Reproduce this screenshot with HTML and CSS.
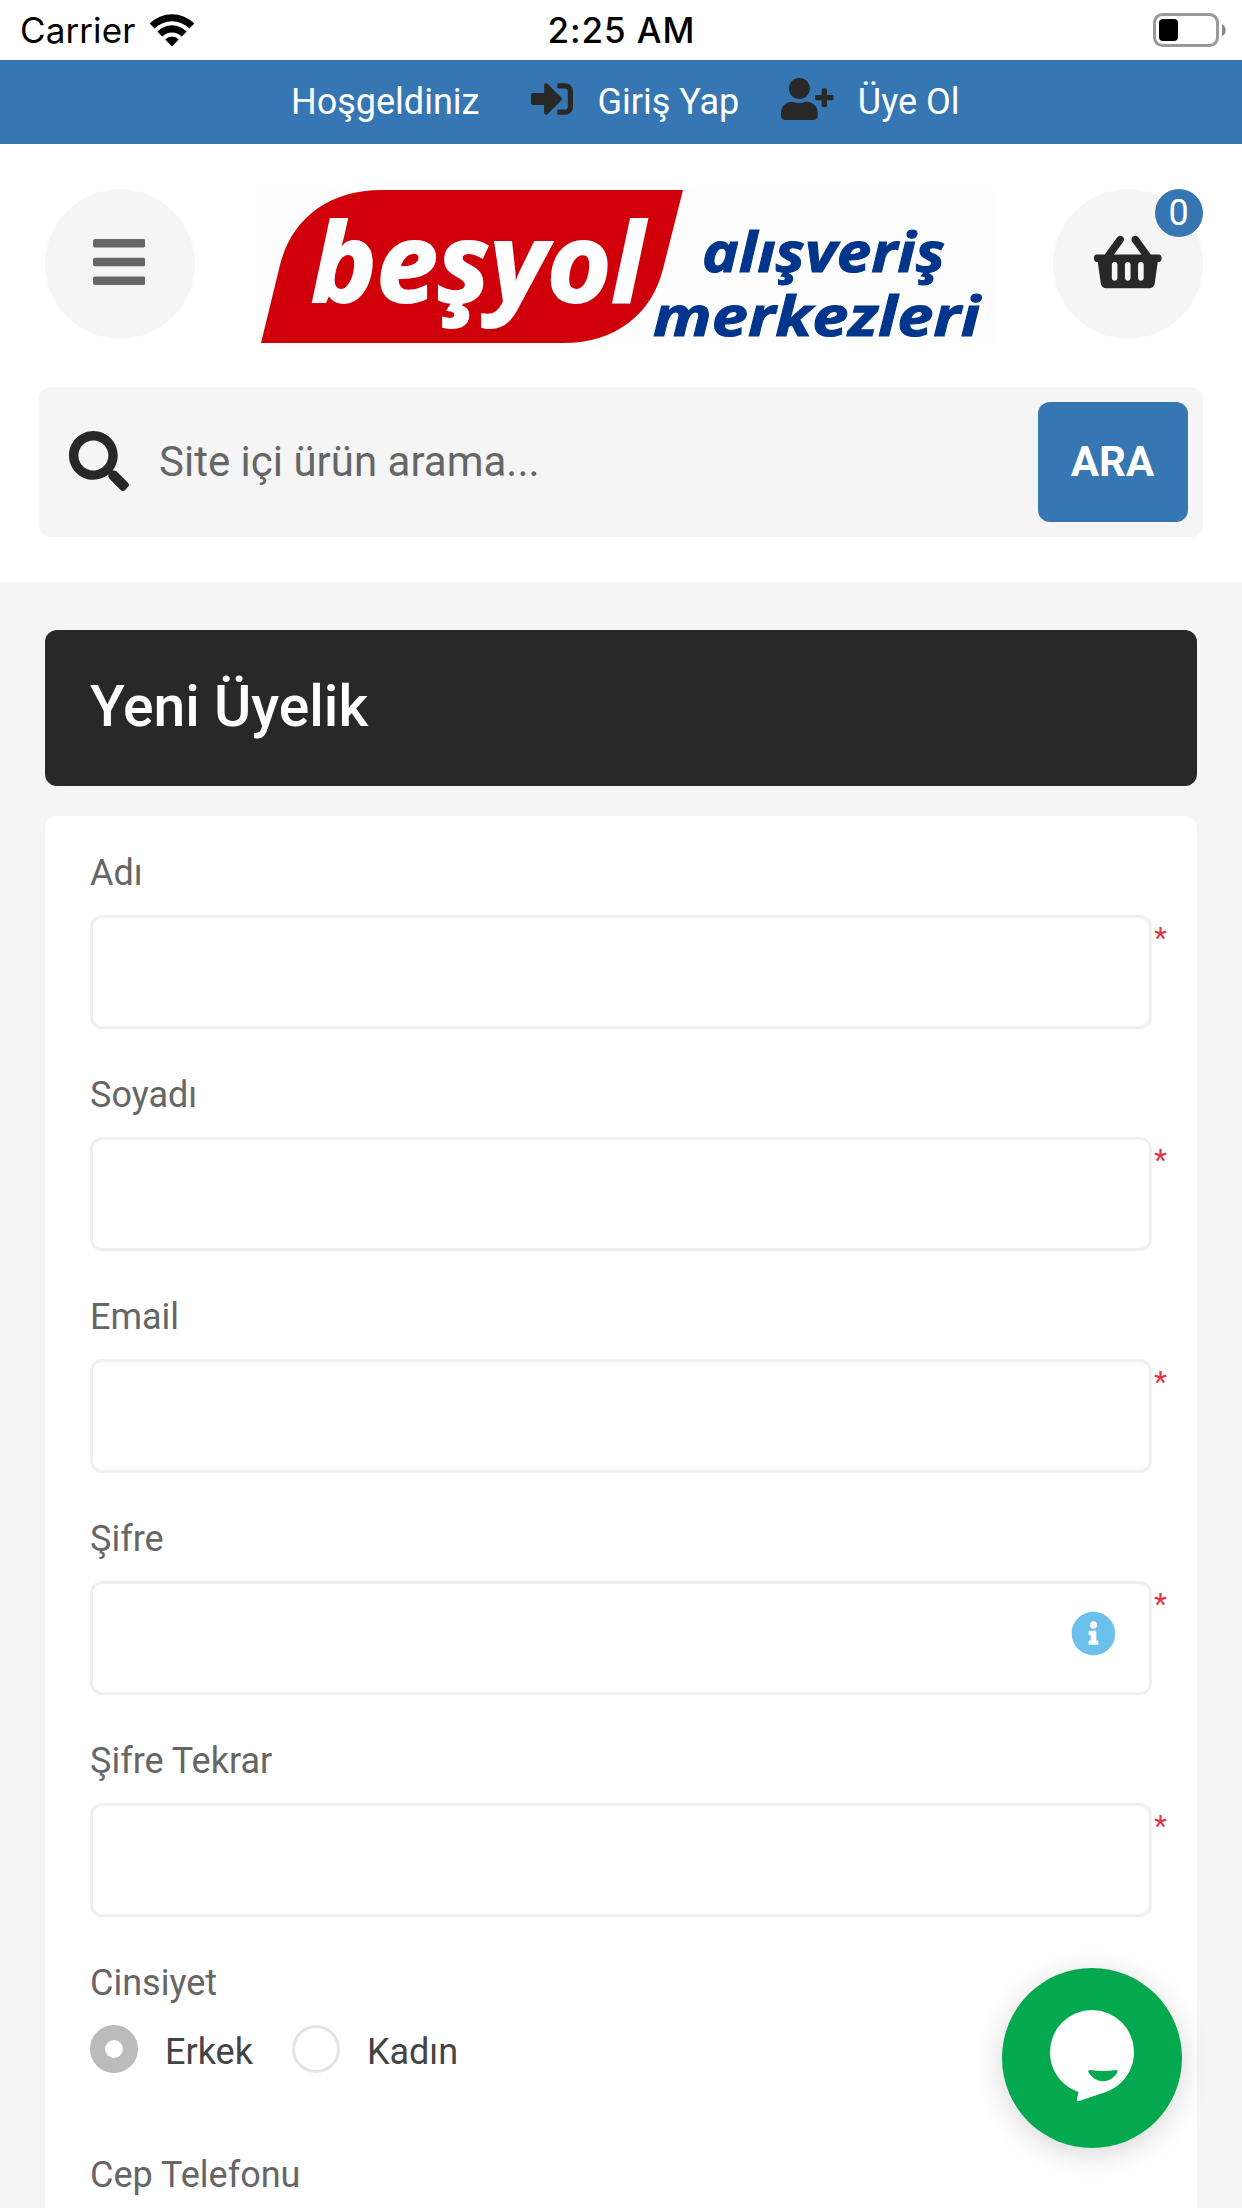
FILE: index.html
```html
<!DOCTYPE html>
<html lang="tr">
<head>
<meta charset="utf-8">
<title>Yeni Üyelik</title>
<link rel="stylesheet" href="styles.css">
</head>
<body>
<div class="status">
  <div class="status-left">
    <span class="carrier">Carrier</span>
    <svg class="wifi" viewBox="0 0 46 34"><path d="M0.6 10.6a31.5 31.5 0 0 1 44.8 0l-4.9 5a24.6 24.6 0 0 0-35 0z"/><path d="M8.3 18.5a20.6 20.6 0 0 1 29.4 0l-5 5a13.6 13.6 0 0 0-19.4 0z"/><path d="M16.2 26.4a9.6 9.6 0 0 1 13.6 0L23 33.4z"/></svg>
  </div>
  <span class="clock">2:25 AM</span>
  <svg class="battery" viewBox="0 0 74 34"><rect x="1.5" y="1.5" width="63" height="31" rx="8" fill="none" stroke="#999" stroke-width="3"/><rect x="6" y="6" width="19" height="22" rx="4"/><path d="M69 11c5 2.500 5 10 0 12z" fill="#888"/></svg>
</div>
<nav class="topbar">
  <span class="welcome">Hoşgeldiniz</span>
  <a class="login"><svg class="icon-login" viewBox="0 0 512 512"><path d="M416 448h-84c-6.600 0-12-5.400-12-12v-40c0-6.600 5.400-12 12-12h84c17.700 0 32-14.300 32-32V160c0-17.700-14.300-32-32-32h-84c-6.600 0-12-5.400-12-12V76c0-6.600 5.400-12 12-12h84c53 0 96 43 96 96v192c0 53-43 96-96 96zm-47-209L201 71c-15-15-41-4.500-41 17v96H24c-13.300 0-24 10.700-24 24v96c0 13.300 10.700 24 24 24h136v96c0 21.500 26 32 41 17l168-168c9.300-9.400 9.300-24.600 0-34z"/></svg><span>Giriş Yap</span></a>
  <a class="join"><svg class="icon-join" viewBox="0 0 640 512"><path d="M624 208h-64v-64c0-8.800-7.200-16-16-16h-32c-8.800 0-16 7.200-16 16v64h-64c-8.800 0-16 7.200-16 16v32c0 8.800 7.200 16 16 16h64v64c0 8.800 7.200 16 16 16h32c8.800 0 16-7.200 16-16v-64h64c8.800 0 16-7.200 16-16v-32c0-8.800-7.200-16-16-16zm-400 48c70.700 0 128-57.300 128-128S294.700 0 224 0 96 57.300 96 128s57.300 128 128 128zm89.600 32h-16.700c-22.200 10.200-46.900 16-72.900 16s-50.600-5.800-72.900-16h-16.700C60.200 288 0 348.200 0 422.400V464c0 26.500 21.500 48 48 48h352c26.500 0 48-21.500 48-48v-41.600c0-74.200-60.200-134.400-134.400-134.400z"/></svg><span>Üye Ol</span></a>
</nav>
<header class="header">
  <div class="brand-row">
    <button class="round"><svg class="icon-menu" viewBox="0 0 448 512"><path d="M16 132h416c8.800 0 16-7.200 16-16V76c0-8.800-7.200-16-16-16H16C7.200 60 0 67.200 0 76v40c0 8.800 7.200 16 16 16zm0 160h416c8.800 0 16-7.200 16-16v-40c0-8.800-7.200-16-16-16H16c-8.800 0-16 7.200-16 16v40c0 8.800 7.200 16 16 16zm0 160h416c8.800 0 16-7.200 16-16v-40c0-8.800-7.200-16-16-16H16c-8.800 0-16 7.200-16 16v40c0 8.800 7.200 16 16 16z"/></svg></button>
    <svg class="logo" viewBox="253 189 741 154">
      <rect x="253" y="189" width="741" height="154" fill="#fdfdfd"/>
      <path d="M260 343 279 265C290 221 325 190 381 190H682L662 269C651 313 616 343 562 343Z" fill="#d0000b"/>
      <text class="logo-main" x="310" y="301.500" textLength="333" lengthAdjust="spacingAndGlyphs">beşyol</text>
      <text class="logo-sub" x="701" y="272" textLength="243" lengthAdjust="spacingAndGlyphs">alışveriş</text>
      <text class="logo-sub" x="652" y="335.500" textLength="327" lengthAdjust="spacingAndGlyphs">merkezleri</text>
    </svg>
    <button class="round"><svg class="icon-basket" viewBox="0 0 576 512"><path d="M576 216v16c0 13.300-10.700 24-24 24h-8l-26.100 182.800C514.500 462.400 494.300 480 470.400 480H105.600c-23.900 0-44.100-17.600-47.500-41.200L32 256h-8c-13.300 0-24-10.700-24-24v-16c0-13.300 10.700-24 24-24h67.300l106.800-146.800c10.400-14.300 30.400-17.500 44.700-7.100 14.300 10.400 17.500 30.400 7.100 44.700L170.500 192h235.100L326.100 82.800c-10.400-14.300-7.200-34.300 7.100-44.700 14.300-10.400 34.300-7.200 44.700 7.100L484.700 192H552c13.300 0 24 10.700 24 24zM312 392V280c0-13.300-10.700-24-24-24s-24 10.700-24 24v112c0 13.300 10.700 24 24 24s24-10.700 24-24zm112 0V280c0-13.300-10.700-24-24-24s-24 10.700-24 24v112c0 13.300 10.700 24 24 24s24-10.700 24-24zm-224 0V280c0-13.300-10.700-24-24-24s-24 10.700-24 24v112c0 13.300 10.700 24 24 24s24-10.700 24-24z"/></svg><span class="badge">0</span></button>
  </div>
  <form class="search">
    <svg class="icon-search" viewBox="0 0 512 512"><path d="M505 442.700 405.300 343c-4.500-4.500-10.600-7-17-7H372c27.600-35.300 44-79.700 44-128C416 93.100 322.900 0 208 0S0 93.100 0 208s93.100 208 208 208c48.300 0 92.700-16.400 128-44v16.300c0 6.400 2.500 12.500 7 17l99.700 99.700c9.400 9.400 24.600 9.400 33.900 0l28.300-28.300c9.400-9.400 9.400-24.600.1-34zM208 336c-70.700 0-128-57.200-128-128 0-70.700 57.200-128 128-128 70.700 0 128 57.200 128 128 0 70.700-57.200 128-128 128z"/></svg>
    <input class="search-input" type="text" placeholder="Site içi ürün arama...">
    <button class="search-button" type="button">ARA</button>
  </form>
</header>
<main class="page">
  <h1 class="title">Yeni Üyelik</h1>
  <form class="card">
    <label class="field"><span class="label">Adı</span><span class="control"><input type="text"><span class="req">*</span></span></label>
    <label class="field"><span class="label">Soyadı</span><span class="control"><input type="text"><span class="req">*</span></span></label>
    <label class="field"><span class="label">Email</span><span class="control"><input type="text"><span class="req">*</span></span></label>
    <label class="field"><span class="label">Şifre</span><span class="control"><input type="password"><span class="req">*</span><svg class="icon-info" viewBox="0 0 512 512"><path d="M256 8C119 8 8 119.100 8 256c0 137 111 248 248 248s248-111 248-248C504 119.100 393 8 256 8zm0 110c23.200 0 42 18.800 42 42s-18.800 42-42 42-42-18.800-42-42 18.800-42 42-42zm56 254c0 6.600-5.400 12-12 12h-88c-6.600 0-12-5.400-12-12v-24c0-6.600 5.400-12 12-12h12v-64h-12c-6.600 0-12-5.400-12-12v-24c0-6.600 5.400-12 12-12h64c6.600 0 12 5.400 12 12v100h12c6.600 0 12 5.400 12 12z"/></svg></span></label>
    <label class="field"><span class="label">Şifre Tekrar</span><span class="control"><input type="password"><span class="req">*</span></span></label>
    <div class="gender">
      <span class="label">Cinsiyet</span>
      <div class="radios">
        <label class="radio"><span class="dot checked"></span>Erkek</label>
        <label class="radio"><span class="dot"></span>Kadın</label>
      </div>
    </div>
    <span class="label">Cep Telefonu</span>
  </form>
</main>
<button class="chat"><svg class="icon-chat" viewBox="0 0 180 180"><path d="M90 42a42 42 0 0 1 42 42c0 19-12 34-28 40L77 133Q74 134 75 131L76.500 124C60 118 48 103 48 84A42 42 0 0 1 90 42Z" fill="#fff"/><path d="M88 102Q101 104 114 102Q116.500 102 115 105C108 116 94 116 87 105Q85 102 88 102Z" fill="#04a84e"/></svg></button>
</body>
</html>
```
FILE: styles.css
```css
* { box-sizing: border-box; }
body {
  margin: 0;
  height: 2208px;
  overflow: hidden;
  background: #f5f5f5;
  font-family: Roboto, "Liberation Sans", sans-serif;
  font-size: 36px;
  color: #666;
}
button { border: 0; padding: 0; font-family: inherit; }
svg { display: block; flex: none; }

.status {
  display: grid;
  grid-template-columns: 1fr auto 1fr;
  align-items: center;
  height: 60px;
  padding: 0 15px 0 20px;
  background: #fff;
  color: #000;
  font-family: Inter, "Liberation Sans", sans-serif;
  font-size: 35px;
  line-height: 60px;
}
.status-left { display: flex; align-items: center; gap: 14px; letter-spacing: 0.1px; }
.status-left .wifi { margin-top: -1px; }
.wifi { width: 46px; height: 34px; }
.clock { font-weight: 500; letter-spacing: 0.9px; margin-left: -4px; }
.battery { width: 74px; height: 34px; justify-self: end; }

.topbar {
  display: flex;
  align-items: center;
  height: 84px;
  padding-left: 291px;
  background: #3677b3;
  color: #fff;
  line-height: 84px;
}
.topbar a { display: flex; align-items: center; gap: 24px; }
.topbar svg { fill: #282828; margin-top: -7px; }
.login { margin-left: 52px; }
.join { margin-left: 42px; }
.icon-login { width: 42px; height: 42px; }
.icon-join { width: 52.500px; height: 42px; }

.header { height: 438px; padding: 45px 39px 45px; background: #fff; }
.brand-row { display: flex; justify-content: space-between; padding-left: 6px; height: 198px; }
.round {
  position: relative;
  display: flex;
  align-items: center;
  justify-content: center;
  width: 150px;
  height: 150px;
  border-radius: 50%;
  background: #f5f5f5;
}
.round svg { height: 60px; margin-top: -4px; }
.round .icon-menu { width: 52.500px; margin-right: 2px; fill: #666; }
.icon-basket { width: 67.500px; fill: #282828; }
.badge {
  position: absolute;
  top: 0;
  right: 0;
  width: 48px;
  height: 48px;
  padding-right: 1px;
  border-radius: 50%;
  background: #3677b3;
  color: #fff;
  font-size: 36px;
  line-height: 48px;
  text-align: center;
}
.logo { width: 741px; height: 154px; }
.logo-main, .logo-sub {
  font-family: "Open Sans", "Noto Sans", sans-serif;
  font-weight: 700;
  font-style: italic;
}
.logo-main { font-size: 109px; fill: #fff; stroke: #fff; stroke-width: 2; }
.logo-sub { font-size: 55px; fill: #00358c; stroke: #00358c; stroke-width: 1; }

.search {
  display: flex;
  align-items: center;
  height: 150px;
  padding: 0 15px 0 30px;
  border-radius: 12px;
  background: #f5f5f5;
}
.icon-search { width: 60px; height: 60px; margin-top: -3px; fill: #282828; }
.search-input {
  flex: 1;
  min-width: 0;
  height: 120px;
  padding: 0 0 2px 30px;
  border: 0;
  background: none;
  font: 42px Roboto, "Liberation Sans", sans-serif;
}
.search-input::placeholder { color: #666; }
.search-button {
  width: 150px;
  height: 120px;
  padding: 0 1px 2px 0;
  border-radius: 12px;
  background: #3677b3;
  color: #fff;
  font-size: 42px;
  font-weight: 700;
}

.page { padding: 48px 45px 0; }
.title {
  height: 156px;
  margin: 0 0 30px;
  padding-left: 45px;
  border-radius: 12px;
  background: #282828;
  color: #fff;
  font-size: 57px;
  font-weight: 500;
  line-height: 153px;
}
.card { height: 1500px; padding: 30px 45px; border-radius: 12px; background: #fff; }
.field { display: block; height: 222px; }
.label { display: block; height: 69px; line-height: 54px; }
.control { position: relative; display: block; }
.control input {
  display: block;
  width: 100%;
  height: 114px;
  border: 3px solid #f0f0f0;
  border-radius: 12px;
  background: #fff;
}
.req {
  position: absolute;
  top: 8px;
  left: 1064px;
  color: #dc3545;
  font-size: 30px;
  line-height: 30px;
}
.icon-info {
  position: absolute;
  top: 30px;
  right: 36px;
  width: 45px;
  height: 45px;
  fill: #6cc0ec;
}
.gender { height: 192px; }
.gender .label { height: 69px; }
.radios { display: flex; gap: 39px; color: #444; }
.radio { display: flex; gap: 27px; height: 48px; line-height: 54px; }
.dot { width: 48px; height: 48px; border: 3px solid #e4e4e4; border-radius: 50%; background: #fff; }
.dot.checked { border: 15px solid #bbb; }

.chat {
  position: fixed;
  top: 1968px;
  left: 1002px;
  width: 180px;
  height: 180px;
  border-radius: 50%;
  background: #04a84e;
  box-shadow: 0 6px 30px rgba(0, 0, 0, 0.16);
}
.icon-chat { width: 180px; height: 180px; }
```
